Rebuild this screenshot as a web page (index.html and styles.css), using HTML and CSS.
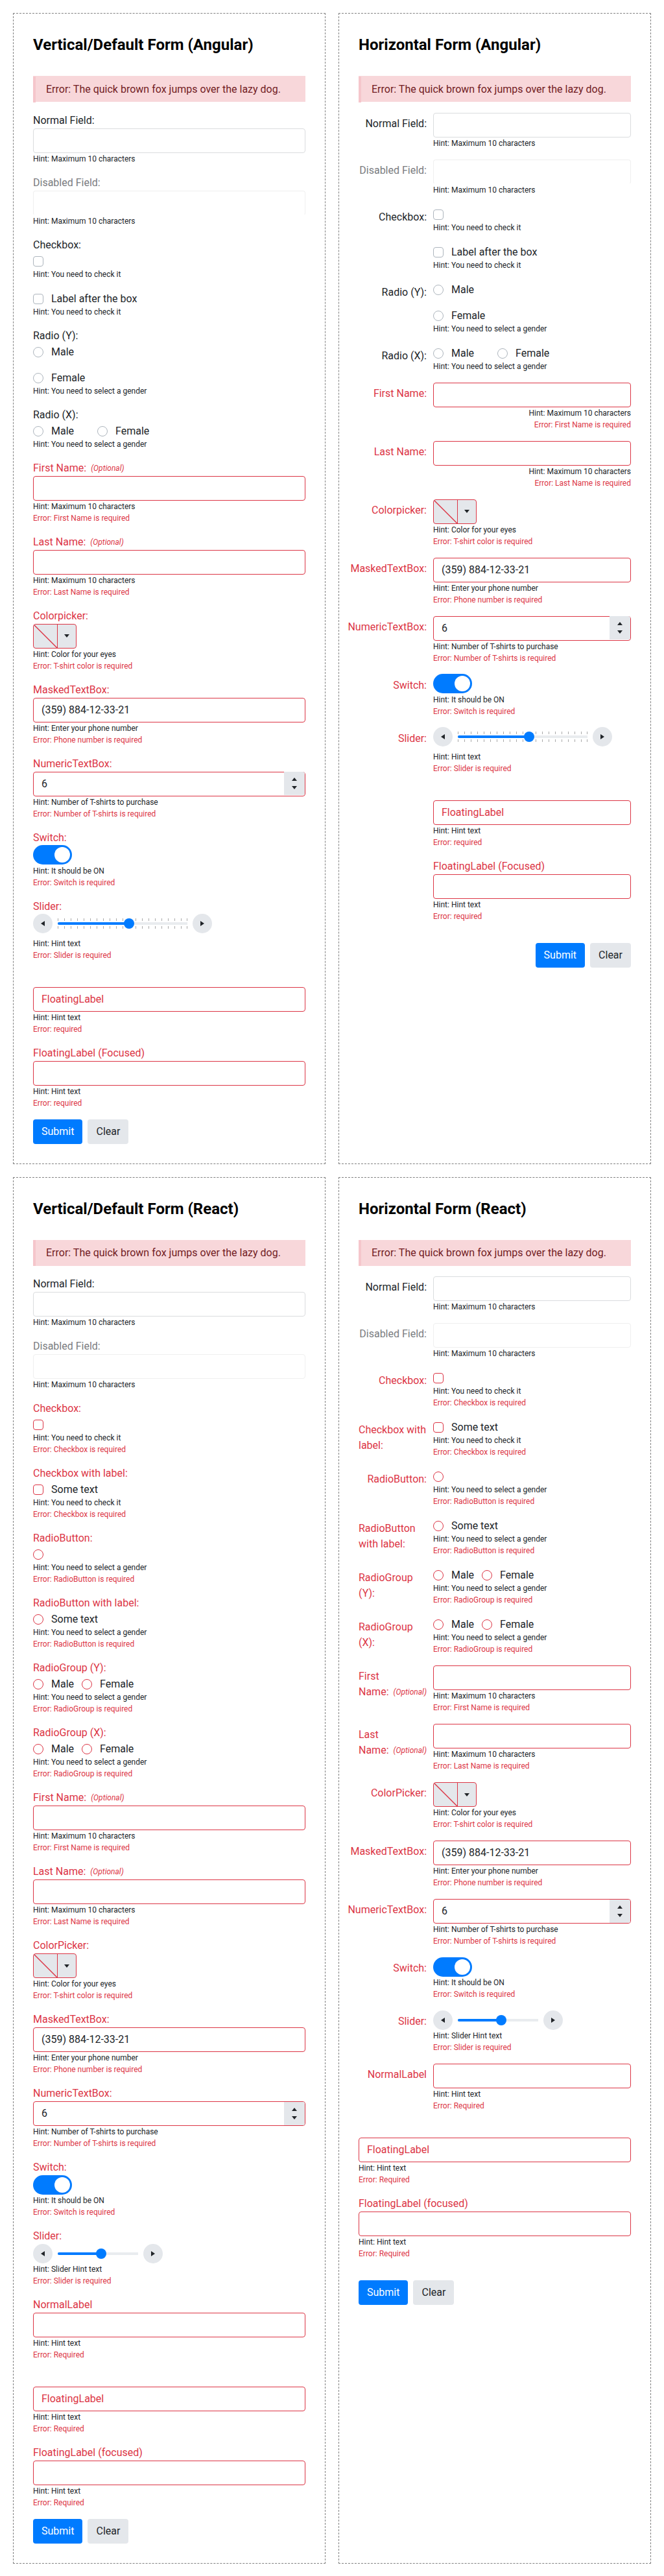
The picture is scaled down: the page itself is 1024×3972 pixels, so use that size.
FILE: index.html
```html
<!DOCTYPE html>
<html lang="en">
<head>
<meta charset="utf-8">
<title>Forms</title>
<link rel="stylesheet" href="styles.css">
</head>
<body>
<main class="grid">

<form class="form angular vertical">
  <h2>Vertical/Default Form (Angular)</h2>
  <div class="message">Error: The quick brown fox jumps over the lazy dog.</div>
  <div class="field"><label>Normal Field:</label><div class="wrap"><div class="textbox"></div><p class="hint">Hint: Maximum 10 characters</p></div></div>
  <div class="field disabled"><label>Disabled Field:</label><div class="wrap"><div class="textbox"></div><p class="hint">Hint: Maximum 10 characters</p></div></div>
  <div class="field"><label>Checkbox:</label><div class="wrap"><div class="choices"><span class="choice"><i class="check"></i></span></div><p class="hint">Hint: You need to check it</p></div></div>
  <div class="field"><div class="wrap"><div class="choices"><span class="choice"><i class="check"></i>Label after the box</span></div><p class="hint">Hint: You need to check it</p></div></div>
  <div class="field"><label>Radio (Y):</label><div class="wrap"><div class="choices stacked"><span class="choice"><i class="radio"></i>Male</span><span class="choice"><i class="radio"></i>Female</span></div><p class="hint">Hint: You need to select a gender</p></div></div>
  <div class="field"><label>Radio (X):</label><div class="wrap"><div class="choices"><span class="choice"><i class="radio"></i>Male</span><span class="choice"><i class="radio"></i>Female</span></div><p class="hint">Hint: You need to select a gender</p></div></div>
  <div class="field invalid"><label><span>First Name:</span><em>(Optional)</em></label><div class="wrap"><div class="textbox"></div><p class="hint">Hint: Maximum 10 characters</p><p class="error">Error: First Name is required</p></div></div>
  <div class="field invalid"><label><span>Last Name:</span><em>(Optional)</em></label><div class="wrap"><div class="textbox"></div><p class="hint">Hint: Maximum 10 characters</p><p class="error">Error: Last Name is required</p></div></div>
  <div class="field invalid"><label>Colorpicker:</label><div class="wrap"><div class="picker"><svg class="swatch" viewBox="0 0 36 36"><path d="M0 0L36 36"/></svg><span class="drop"><i class="tri down"></i></span></div><p class="hint">Hint: Color for your eyes</p><p class="error">Error: T-shirt color is required</p></div></div>
  <div class="field invalid"><label>MaskedTextBox:</label><div class="wrap"><div class="textbox">(359) 884-12-33-21</div><p class="hint">Hint: Enter your phone number</p><p class="error">Error: Phone number is required</p></div></div>
  <div class="field invalid"><label>NumericTextBox:</label><div class="wrap"><div class="textbox numeric">6<span class="spinner"><i class="tri up"></i><i class="tri down"></i></span></div><p class="hint">Hint: Number of T-shirts to purchase</p><p class="error">Error: Number of T-shirts is required</p></div></div>
  <div class="field invalid"><label>Switch:</label><div class="wrap"><div class="switch"><i class="thumb"></i></div><p class="hint">Hint: It should be ON</p><p class="error">Error: Switch is required</p></div></div>
  <div class="field invalid"><label>Slider:</label><div class="wrap"><div class="slider ticks"><span class="round"><i class="tri left"></i></span><div class="track"><div class="fill" style="width:55%"></div><i class="handle"></i></div><span class="round"><i class="tri right"></i></span></div><p class="hint">Hint: Hint text</p><p class="error">Error: Slider is required</p></div></div>
  <div class="field invalid floating"><div class="textbox"><label>FloatingLabel</label></div><p class="hint">Hint: Hint text</p><p class="error">Error: required</p></div>
  <div class="field invalid"><label>FloatingLabel (Focused)</label><div class="wrap"><div class="textbox"></div><p class="hint">Hint: Hint text</p><p class="error">Error: required</p></div></div>
  <div class="buttons"><span class="btn primary">Submit</span><span class="btn">Clear</span></div>
</form>

<form class="form angular horizontal">
  <h2>Horizontal Form (Angular)</h2>
  <div class="message">Error: The quick brown fox jumps over the lazy dog.</div>
  <div class="field"><label>Normal Field:</label><div class="wrap"><div class="textbox"></div><p class="hint">Hint: Maximum 10 characters</p></div></div>
  <div class="field disabled"><label>Disabled Field:</label><div class="wrap"><div class="textbox"></div><p class="hint">Hint: Maximum 10 characters</p></div></div>
  <div class="field"><label>Checkbox:</label><div class="wrap"><div class="choices"><span class="choice"><i class="check"></i></span></div><p class="hint">Hint: You need to check it</p></div></div>
  <div class="field indent"><div class="wrap"><div class="choices"><span class="choice"><i class="check"></i>Label after the box</span></div><p class="hint">Hint: You need to check it</p></div></div>
  <div class="field"><label>Radio (Y):</label><div class="wrap"><div class="choices stacked"><span class="choice"><i class="radio"></i>Male</span><span class="choice"><i class="radio"></i>Female</span></div><p class="hint">Hint: You need to select a gender</p></div></div>
  <div class="field"><label>Radio (X):</label><div class="wrap"><div class="choices"><span class="choice"><i class="radio"></i>Male</span><span class="choice"><i class="radio"></i>Female</span></div><p class="hint">Hint: You need to select a gender</p></div></div>
  <div class="field invalid end"><label>First Name:</label><div class="wrap"><div class="textbox"></div><p class="hint">Hint: Maximum 10 characters</p><p class="error">Error: First Name is required</p></div></div>
  <div class="field invalid end"><label>Last Name:</label><div class="wrap"><div class="textbox"></div><p class="hint">Hint: Maximum 10 characters</p><p class="error">Error: Last Name is required</p></div></div>
  <div class="field invalid"><label>Colorpicker:</label><div class="wrap"><div class="picker"><svg class="swatch" viewBox="0 0 36 36"><path d="M0 0L36 36"/></svg><span class="drop"><i class="tri down"></i></span></div><p class="hint">Hint: Color for your eyes</p><p class="error">Error: T-shirt color is required</p></div></div>
  <div class="field invalid"><label>MaskedTextBox:</label><div class="wrap"><div class="textbox">(359) 884-12-33-21</div><p class="hint">Hint: Enter your phone number</p><p class="error">Error: Phone number is required</p></div></div>
  <div class="field invalid"><label>NumericTextBox:</label><div class="wrap"><div class="textbox numeric">6<span class="spinner"><i class="tri up"></i><i class="tri down"></i></span></div><p class="hint">Hint: Number of T-shirts to purchase</p><p class="error">Error: Number of T-shirts is required</p></div></div>
  <div class="field invalid"><label>Switch:</label><div class="wrap"><div class="switch"><i class="thumb"></i></div><p class="hint">Hint: It should be ON</p><p class="error">Error: Switch is required</p></div></div>
  <div class="field invalid"><label>Slider:</label><div class="wrap"><div class="slider ticks"><span class="round"><i class="tri left"></i></span><div class="track"><div class="fill" style="width:55%"></div><i class="handle"></i></div><span class="round"><i class="tri right"></i></span></div><p class="hint">Hint: Hint text</p><p class="error">Error: Slider is required</p></div></div>
  <div class="field invalid floating indent"><div class="wrap"><div class="textbox"><label>FloatingLabel</label></div><p class="hint">Hint: Hint text</p><p class="error">Error: required</p></div></div>
  <div class="field invalid focused indent"><div class="wrap"><label>FloatingLabel (Focused)</label><div class="textbox"></div><p class="hint">Hint: Hint text</p><p class="error">Error: required</p></div></div>
  <div class="buttons end"><span class="btn primary">Submit</span><span class="btn">Clear</span></div>
</form>

<form class="form react vertical">
  <h2>Vertical/Default Form (React)</h2>
  <div class="message">Error: The quick brown fox jumps over the lazy dog.</div>
  <div class="field"><label>Normal Field:</label><div class="wrap"><div class="textbox"></div><p class="hint">Hint: Maximum 10 characters</p></div></div>
  <div class="field disabled"><label>Disabled Field:</label><div class="wrap"><div class="textbox"></div><p class="hint">Hint: Maximum 10 characters</p></div></div>
  <div class="field invalid"><label>Checkbox:</label><div class="wrap"><div class="choices"><span class="choice"><i class="check"></i></span></div><p class="hint">Hint: You need to check it</p><p class="error">Error: Checkbox is required</p></div></div>
  <div class="field invalid"><label>Checkbox with label:</label><div class="wrap"><div class="choices"><span class="choice"><i class="check"></i>Some text</span></div><p class="hint">Hint: You need to check it</p><p class="error">Error: Checkbox is required</p></div></div>
  <div class="field invalid"><label>RadioButton:</label><div class="wrap"><div class="choices"><span class="choice"><i class="radio"></i></span></div><p class="hint">Hint: You need to select a gender</p><p class="error">Error: RadioButton is required</p></div></div>
  <div class="field invalid"><label>RadioButton with label:</label><div class="wrap"><div class="choices"><span class="choice"><i class="radio"></i>Some text</span></div><p class="hint">Hint: You need to select a gender</p><p class="error">Error: RadioButton is required</p></div></div>
  <div class="field invalid"><label>RadioGroup (Y):</label><div class="wrap"><div class="choices"><span class="choice"><i class="radio"></i>Male</span><span class="choice"><i class="radio"></i>Female</span></div><p class="hint">Hint: You need to select a gender</p><p class="error">Error: RadioGroup is required</p></div></div>
  <div class="field invalid"><label>RadioGroup (X):</label><div class="wrap"><div class="choices"><span class="choice"><i class="radio"></i>Male</span><span class="choice"><i class="radio"></i>Female</span></div><p class="hint">Hint: You need to select a gender</p><p class="error">Error: RadioGroup is required</p></div></div>
  <div class="field invalid"><label><span>First Name:</span><em>(Optional)</em></label><div class="wrap"><div class="textbox"></div><p class="hint">Hint: Maximum 10 characters</p><p class="error">Error: First Name is required</p></div></div>
  <div class="field invalid"><label><span>Last Name:</span><em>(Optional)</em></label><div class="wrap"><div class="textbox"></div><p class="hint">Hint: Maximum 10 characters</p><p class="error">Error: Last Name is required</p></div></div>
  <div class="field invalid"><label>ColorPicker:</label><div class="wrap"><div class="picker"><svg class="swatch" viewBox="0 0 36 36"><path d="M0 0L36 36"/></svg><span class="drop"><i class="tri down"></i></span></div><p class="hint">Hint: Color for your eyes</p><p class="error">Error: T-shirt color is required</p></div></div>
  <div class="field invalid"><label>MaskedTextBox:</label><div class="wrap"><div class="textbox">(359) 884-12-33-21</div><p class="hint">Hint: Enter your phone number</p><p class="error">Error: Phone number is required</p></div></div>
  <div class="field invalid"><label>NumericTextBox:</label><div class="wrap"><div class="textbox numeric">6<span class="spinner"><i class="tri up"></i><i class="tri down"></i></span></div><p class="hint">Hint: Number of T-shirts to purchase</p><p class="error">Error: Number of T-shirts is required</p></div></div>
  <div class="field invalid"><label>Switch:</label><div class="wrap"><div class="switch"><i class="thumb"></i></div><p class="hint">Hint: It should be ON</p><p class="error">Error: Switch is required</p></div></div>
  <div class="field invalid"><label>Slider:</label><div class="wrap"><div class="slider"><span class="round"><i class="tri left"></i></span><div class="track"><div class="fill" style="width:54%"></div><i class="handle"></i></div><span class="round"><i class="tri right"></i></span></div><p class="hint">Hint: Slider Hint text</p><p class="error">Error: Slider is required</p></div></div>
  <div class="field invalid"><label>NormalLabel</label><div class="wrap"><div class="textbox"></div><p class="hint">Hint: Hint text</p><p class="error">Error: Required</p></div></div>
  <div class="field invalid floating"><div class="textbox"><label>FloatingLabel</label></div><p class="hint">Hint: Hint text</p><p class="error">Error: Required</p></div>
  <div class="field invalid"><label>FloatingLabel (focused)</label><div class="wrap"><div class="textbox"></div><p class="hint">Hint: Hint text</p><p class="error">Error: Required</p></div></div>
  <div class="buttons"><span class="btn primary">Submit</span><span class="btn">Clear</span></div>
</form>

<form class="form react horizontal">
  <h2>Horizontal Form (React)</h2>
  <div class="message">Error: The quick brown fox jumps over the lazy dog.</div>
  <div class="field"><label>Normal Field:</label><div class="wrap"><div class="textbox"></div><p class="hint">Hint: Maximum 10 characters</p></div></div>
  <div class="field disabled"><label>Disabled Field:</label><div class="wrap"><div class="textbox"></div><p class="hint">Hint: Maximum 10 characters</p></div></div>
  <div class="field invalid"><label>Checkbox:</label><div class="wrap"><div class="choices"><span class="choice"><i class="check"></i></span></div><p class="hint">Hint: You need to check it</p><p class="error">Error: Checkbox is required</p></div></div>
  <div class="field invalid"><label>Checkbox with label:</label><div class="wrap"><div class="choices"><span class="choice"><i class="check"></i>Some text</span></div><p class="hint">Hint: You need to check it</p><p class="error">Error: Checkbox is required</p></div></div>
  <div class="field invalid"><label>RadioButton:</label><div class="wrap"><div class="choices"><span class="choice"><i class="radio"></i></span></div><p class="hint">Hint: You need to select a gender</p><p class="error">Error: RadioButton is required</p></div></div>
  <div class="field invalid"><label>RadioButton with label:</label><div class="wrap"><div class="choices"><span class="choice"><i class="radio"></i>Some text</span></div><p class="hint">Hint: You need to select a gender</p><p class="error">Error: RadioButton is required</p></div></div>
  <div class="field invalid"><label>RadioGroup (Y):</label><div class="wrap"><div class="choices"><span class="choice"><i class="radio"></i>Male</span><span class="choice"><i class="radio"></i>Female</span></div><p class="hint">Hint: You need to select a gender</p><p class="error">Error: RadioGroup is required</p></div></div>
  <div class="field invalid"><label>RadioGroup (X):</label><div class="wrap"><div class="choices"><span class="choice"><i class="radio"></i>Male</span><span class="choice"><i class="radio"></i>Female</span></div><p class="hint">Hint: You need to select a gender</p><p class="error">Error: RadioGroup is required</p></div></div>
  <div class="field invalid"><label><span>First Name:</span><em>(Optional)</em></label><div class="wrap"><div class="textbox"></div><p class="hint">Hint: Maximum 10 characters</p><p class="error">Error: First Name is required</p></div></div>
  <div class="field invalid"><label><span>Last Name:</span><em>(Optional)</em></label><div class="wrap"><div class="textbox"></div><p class="hint">Hint: Maximum 10 characters</p><p class="error">Error: Last Name is required</p></div></div>
  <div class="field invalid"><label>ColorPicker:</label><div class="wrap"><div class="picker"><svg class="swatch" viewBox="0 0 36 36"><path d="M0 0L36 36"/></svg><span class="drop"><i class="tri down"></i></span></div><p class="hint">Hint: Color for your eyes</p><p class="error">Error: T-shirt color is required</p></div></div>
  <div class="field invalid"><label>MaskedTextBox:</label><div class="wrap"><div class="textbox">(359) 884-12-33-21</div><p class="hint">Hint: Enter your phone number</p><p class="error">Error: Phone number is required</p></div></div>
  <div class="field invalid"><label>NumericTextBox:</label><div class="wrap"><div class="textbox numeric">6<span class="spinner"><i class="tri up"></i><i class="tri down"></i></span></div><p class="hint">Hint: Number of T-shirts to purchase</p><p class="error">Error: Number of T-shirts is required</p></div></div>
  <div class="field invalid"><label>Switch:</label><div class="wrap"><div class="switch"><i class="thumb"></i></div><p class="hint">Hint: It should be ON</p><p class="error">Error: Switch is required</p></div></div>
  <div class="field invalid"><label>Slider:</label><div class="wrap"><div class="slider"><span class="round"><i class="tri left"></i></span><div class="track"><div class="fill" style="width:54%"></div><i class="handle"></i></div><span class="round"><i class="tri right"></i></span></div><p class="hint">Hint: Slider Hint text</p><p class="error">Error: Slider is required</p></div></div>
  <div class="field invalid"><label>NormalLabel</label><div class="wrap"><div class="textbox"></div><p class="hint">Hint: Hint text</p><p class="error">Error: Required</p></div></div>
  <div class="field invalid floating"><div class="wrap"><div class="textbox"><label>FloatingLabel</label></div><p class="hint">Hint: Hint text</p><p class="error">Error: Required</p></div></div>
  <div class="field invalid focused"><div class="wrap"><label>FloatingLabel (focused)</label><div class="textbox"></div><p class="hint">Hint: Hint text</p><p class="error">Error: Required</p></div></div>
  <div class="buttons"><span class="btn primary">Submit</span><span class="btn">Clear</span></div>
</form>

</main>
</body>
</html>
```
FILE: styles.css
```css
* { box-sizing: border-box; }

body {
  margin: 0;
  background: #fff;
  color: #212529;
  font: 16px/24px Roboto, sans-serif;
}

.grid {
  display: grid;
  grid-template-columns: 482px 482px;
  gap: 20px;
  padding: 20px 20px 19px;
}

.form {
  padding: 30px 30px 29.5px;
  border: 1px dashed #808080;
}

h2 {
  margin: 0 0 30.5px;
  color: #000;
  font-size: 24px;
  line-height: 36px;
  font-weight: 700;
}
.angular h2 { margin-bottom: 30px; }

.message {
  height: 40px;
  padding: 8px 16px;
  border-left: 4px solid #f5c6cb;
  background: #f8d7da;
  color: #721c24;
}
.angular .message {
  position: relative;
  margin-bottom: 16.5px;
  padding: 8.5px 20px 0;
  border: 0;
}
.angular .message::before {
  content: "";
  position: absolute;
  left: 0;
  top: 1px;
  width: 4px;
  height: 40px;
  background: #f5c6cb;
}

/* Fields */
.field { margin-top: 16px; }
.field label { display: flex; align-items: flex-end; }
.field em { margin-left: 7px; font-size: 12px; line-height: 24px; }
.wrap { flex: 1; min-width: 0; }

.hint, .error { margin: 0; font-size: 12px; line-height: 18px; }
.invalid label, .error { color: #dc3545; }
.end .hint, .end .error { text-align: right; }

.textbox {
  display: flex;
  align-items: center;
  height: 38px;
  padding: 0 12px;
  border: 1px solid #dadcde;
  border-radius: 4px;
  background: #fff;
}
.invalid .textbox { border-color: #dc3545; }
.disabled label { color: #7a7c7f; }
.disabled .textbox { border-color: #efefef; }
.angular .disabled .textbox { border-bottom-color: transparent; }

.floating { padding-top: 24px; }

.horizontal .field { display: flex; align-items: flex-start; }
.horizontal .field > label {
  flex: none;
  justify-content: flex-end;
  width: 105px;
  margin-right: 10px;
  padding-top: 5px;
}
.horizontal .indent { margin-left: 115px; }

/* Checkboxes and radios */
.choices { display: flex; gap: 12px; height: 24px; padding-top: 1px; }
.angular .choices { gap: 36px; }
.angular .choices.stacked { flex-direction: column; gap: 16px; height: 64px; }
.choice { display: flex; flex: none; align-items: center; gap: 12px; height: 24px; }
.check, .radio {
  width: 16px;
  height: 16px;
  border: 1px solid #adb5bd;
  border-radius: 4px;
  background: #fff;
}
.radio { border-radius: 50%; }
.invalid .check, .invalid .radio { border-color: #dc3545; }

/* Arrow glyphs */
.tri { width: 0; height: 0; border: 0 solid transparent; }
.tri.down { border-width: 5.5px 4px 0; border-top-color: #212529; }
.tri.up { border-width: 0 4px 5.5px; border-bottom-color: #212529; }
.tri.left { border-width: 4px 6px 4px 0; border-right-color: #212529; }
.tri.right { border-width: 4px 0 4px 6px; border-left-color: #212529; }

/* Color picker */
.picker {
  display: flex;
  width: 67px;
  height: 38px;
  border: 1px solid #dc3545;
  border-radius: 4px;
  background: #e4e7eb;
  overflow: hidden;
}
.swatch { width: 36px; height: 36px; stroke: #dc3545; stroke-width: 1.4; }
.drop {
  display: flex;
  flex: 1;
  align-items: center;
  justify-content: center;
  border-left: 1px solid #dc3545;
}

/* Numeric box */
.numeric { padding-right: 0; justify-content: space-between; }
.spinner {
  display: flex;
  flex-direction: column;
  align-items: center;
  justify-content: center;
  gap: 8px;
  width: 32px;
  height: 36px;
  border-radius: 0 3px 3px 0;
  background: #e4e7eb;
}
.angular .spinner { margin: -1px 0 1px; }

/* Switch */
.switch {
  display: flex;
  justify-content: flex-end;
  width: 60px;
  height: 30px;
  padding: 3px;
  border-radius: 15px;
  background: #007bff;
}
.angular .switch { margin: -.25px 0 .25px; }
.thumb { width: 24px; height: 24px; border-radius: 50%; background: #fff; }

/* Slider */
.slider { display: flex; gap: 8px; height: 30px; }
.slider.ticks { height: 37.1px; margin-top: -.25px; }
.round {
  display: flex;
  align-items: center;
  justify-content: center;
  width: 30px;
  height: 30px;
  border-radius: 50%;
  background: #e4e7eb;
}
.track {
  display: flex;
  align-items: center;
  width: 124px;
  height: 30px;
  background: linear-gradient(#e9ecef, #e9ecef) 0 13px / 100% 4px no-repeat;
}
.ticks .track {
  width: 200px;
  background:
    linear-gradient(#e9ecef, #e9ecef) 0 13px / 100% 4px no-repeat,
    linear-gradient(#aaa, #aaa) 199px 7px / 1px 4px no-repeat,
    linear-gradient(#aaa, #aaa) 199px 19px / 1px 4px no-repeat,
    repeating-linear-gradient(to right, #aaa 0 1px, transparent 1px 10px) 0 7px / 100% 4px no-repeat,
    repeating-linear-gradient(to right, #aaa 0 1px, transparent 1px 10px) 0 19px / 100% 4px no-repeat;
}
.fill { height: 4px; border-radius: 2px; background: #007bff; }
.handle {
  flex: none;
  width: 16px;
  height: 16px;
  margin-left: -8px;
  border-radius: 50%;
  background: #007bff;
}

/* Buttons */
.buttons { display: flex; gap: 8px; margin-top: 16px; }
.horizontal .buttons { margin-top: 32px; }
.buttons.end { justify-content: flex-end; }
.btn {
  height: 38px;
  padding: 7px 13px;
  border-radius: 4px;
  background: #e4e7eb;
}
.btn.primary { background: #007bff; color: #fff; }
```
